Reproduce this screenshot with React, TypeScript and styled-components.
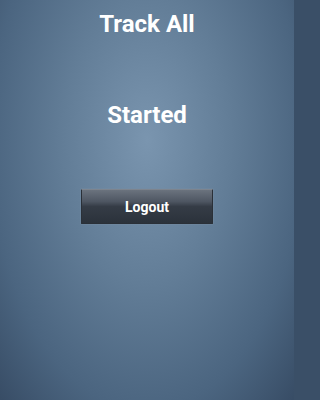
import React from 'react';
import styled, { createGlobalStyle } from 'styled-components';

const GlobalStyle = createGlobalStyle`
  html, body {
    margin: 0;
    padding: 0;
    background: #3a4f67;
  }
`;

const Screen = styled.div`
  width: 294px;
  height: 400px;
  box-sizing: border-box;
  display: flex;
  flex-direction: column;
  align-items: center;
  padding-top: 10px;
  font-family: Roboto, 'Liberation Sans', sans-serif;
  color: #ffffff;
  background: radial-gradient(
    ellipse 210px 360px at 50% 140px,
    #7a95af 0%,
    #627d97 40%,
    #4b6580 75%,
    #384d66 100%
  );
`;

const Heading = styled.div<{ $gap?: number }>`
  font-size: 24px;
  font-weight: 700;
  line-height: 28px;
  margin-top: ${(p) => p.$gap ?? 0}px;
`;

const Button = styled.button`
  margin-top: 60px;
  width: 132px;
  height: 35px;
  box-sizing: border-box;
  border: 1px solid #2a3038;
  border-top-color: #7d848e;
  border-radius: 1px;
  background: linear-gradient(
    to bottom,
    #6b737e 0%,
    #4e5662 35%,
    #353c46 50%,
    #2b323b 100%
  );
  color: #ffffff;
  font-family: Roboto, 'Liberation Sans', sans-serif;
  font-size: 14px;
  font-weight: 700;
  cursor: pointer;
  box-shadow: 0 0 0 1px rgba(120, 140, 160, 0.35);
`;

const App = () => (
  <>
    <GlobalStyle />
    <Screen>
      <Heading>Track All</Heading>
      <Heading $gap={63}>Started</Heading>
      <Button>Logout</Button>
    </Screen>
  </>
);

export default App;
